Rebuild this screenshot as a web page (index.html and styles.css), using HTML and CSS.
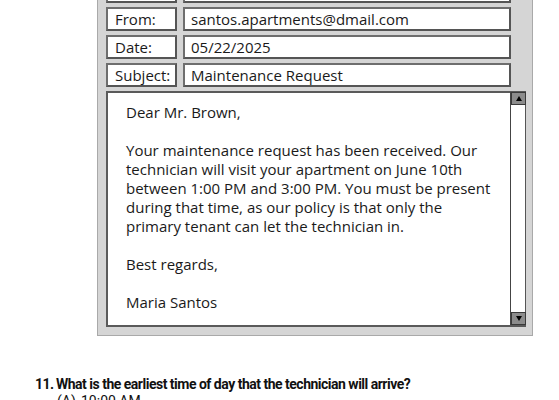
FILE: index.html
```html
<!DOCTYPE html>
<html>
<head>
<meta charset="utf-8">
<link rel="stylesheet" href="styles.css">
</head>
<body>
<div class="panel">
  <div class="row"><div class="label"></div><div class="value"></div></div>
  <div class="row"><div class="label">From:</div><div class="value">santos.apartments@dmail.com</div></div>
  <div class="row"><div class="label">Date:</div><div class="value">05/22/2025</div></div>
  <div class="row"><div class="label">Subject:</div><div class="value">Maintenance Request</div></div>
  <div class="body">
    <div class="text">
      <p>Dear Mr. Brown,</p>
      <p>Your maintenance request has been received. Our technician will visit your apartment on June 10th between 1:00 PM and 3:00 PM. You must be present during that time, as our policy is that only the primary tenant can let the technician in.</p>
      <p>Best regards,</p>
      <p>Maria Santos</p>
    </div>
    <div class="scrollbar">
      <div class="sbtn"><span class="tri up"></span></div>
      <div class="track"></div>
      <div class="sbtn"><span class="tri down"></span></div>
    </div>
  </div>
</div>
<div class="question">
  <div class="q"><span class="num">11.</span><span>What is the earliest time of day that the technician will arrive?</span></div>
  <div class="opt"><span class="letter">(A)</span><span>10:00 AM</span></div>
</div>
</body>
</html>
```
FILE: styles.css
```css
html, body {
  margin: 0;
  padding: 0;
  background: #ffffff;
  overflow: hidden;
}
body {
  font-family: "Open Sans", "Noto Sans", sans-serif;
  color: #1a1a1a;
  width: 559px;
  height: 400px;
}
.panel {
  margin: -30px 0 0 97px;
  width: 420px;
  background: #d5d5d5;
  border: 1px solid #a9a9a9;
  padding: 8px 6px 8px 8px;
  display: flex;
  flex-direction: column;
  gap: 4px;
}
.row {
  display: flex;
  gap: 6px;
  height: 24px;
  width: 405px;
}
.label, .value {
  box-sizing: border-box;
  background: #fff;
  border: 2px solid #6e6e6e;
  border-right-color: #555;
  border-bottom-color: #555;
  font-size: 15px;
  line-height: 20px;
  white-space: nowrap;
  overflow: hidden;
}
.label {
  width: 71px;
  padding-left: 7px;
}
.value {
  flex: 1;
  padding-left: 6px;
}
.body {
  box-sizing: border-box;
  height: 236px;
  width: 420px;
  background: #fff;
  border: 2px solid #5a5a5a;
  border-right: none;
  display: flex;
}
.text {
  flex: 1;
  padding: 10px 12px 0 18px;
  font-size: 15px;
  line-height: 19px;
}
.text p {
  margin: 0 0 19px 0;
}
.scrollbar {
  width: 15px;
  display: flex;
  flex-direction: column;
  border-left: 1px solid #444;
  margin-top: -1px;
}
.track {
  flex: 1;
  background: #fff;
  border-right: 1px solid #555;
}
.sbtn {
  box-sizing: border-box;
  height: 13px;
  background: #8c8c8c;
  border: 1px solid #3a3a3a;
  display: flex;
  align-items: center;
  justify-content: center;
}
.tri {
  width: 0;
  height: 0;
  border-left: 3px solid transparent;
  border-right: 3px solid transparent;
}
.tri.up { border-bottom: 5px solid #000; }
.tri.down { border-top: 5px solid #000; }
.question {
  margin: 40px 0 0 35px;
  font-family: "Roboto", "Liberation Sans", sans-serif;
  font-weight: 700;
  font-size: 14px;
  color: #111;
  letter-spacing: -0.5px;
}
.q {
  display: flex;
  line-height: 16px;
}
.num {
  width: 21px;
}
.opt {
  display: flex;
  font-weight: 400;
  line-height: 16px;
  padding-left: 22px;
  letter-spacing: 0;
  margin-top: 1px;
}
.letter {
  width: 24px;
}
```
